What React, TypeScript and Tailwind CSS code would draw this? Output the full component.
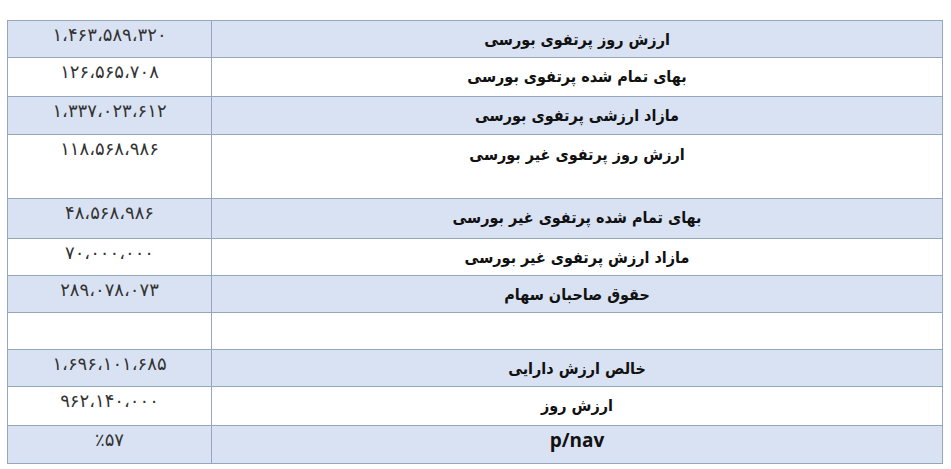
import React from 'react';

interface Row {
  value: string;
  label: string;
  height: number;
  tint: boolean;
  top?: boolean;
  latin?: boolean;
}

const rows: Row[] = [
  { value: '۱،۴۶۳،۵۸۹،۳۲۰', label: 'ارزش روز پرتفوی بورسی', height: 37, tint: true },
  { value: '۱۲۶،۵۶۵،۷۰۸', label: 'بهای تمام شده پرتفوی بورسی', height: 39, tint: false },
  { value: '۱،۳۳۷،۰۲۳،۶۱۲', label: 'مازاد ارزشی پرتفوی بورسی', height: 38, tint: true },
  { value: '۱۱۸،۵۶۸،۹۸۶', label: 'ارزش روز پرتفوی غیر بورسی', height: 64, tint: false, top: true },
  { value: '۴۸،۵۶۸،۹۸۶', label: 'بهای تمام شده پرتفوی غیر بورسی', height: 40, tint: true },
  { value: '۷۰،۰۰۰،۰۰۰', label: 'مازاد ارزش پرتفوی غیر بورسی', height: 37, tint: false },
  { value: '۲۸۹،۰۷۸،۰۷۳', label: 'حقوق صاحبان سهام', height: 37, tint: true },
  { value: '', label: '', height: 37, tint: false },
  { value: '۱،۶۹۶،۱۰۱،۶۸۵', label: 'خالص ارزش دارایی', height: 37, tint: true },
  { value: '۹۶۲،۱۴۰،۰۰۰', label: 'ارزش روز', height: 39, tint: false },
  { value: '٪۵۷', label: 'p/nav', height: 38, tint: true, latin: true },
];

export default function App() {
  return (
    <div className="w-[951px] h-[469px] bg-white pt-[20px] pl-[7px]">
      <div className="w-[936px] border-l border-t border-[#95a6bf]">
        {rows.map((r, i) => (
          <div
            key={i}
            className={`flex border-b border-[#95a6bf] ${r.tint ? 'bg-[#d9e2f2]' : 'bg-white'}`}
            style={{ height: r.height }}
          >
            <div
              dir="ltr"
              className="w-[204px] shrink-0 border-r border-[#95a6bf] flex justify-center pt-[3px] text-[18px] leading-[22px] text-[#333] font-['DejaVu_Sans',sans-serif]"
            >
              {r.value}
            </div>
            <div
              dir="rtl"
              className={`flex-1 border-r border-[#95a6bf] flex justify-center font-bold text-[#111] ${
                r.latin
                  ? "pt-[2px] text-[19px] leading-[24px] font-['Open_Sans',sans-serif]"
                  : `${r.top ? 'pt-[8px]' : 'pt-[7px]'} text-[16px] leading-[24px] font-['DejaVu_Sans_Condensed','DejaVu_Sans',sans-serif]`
              }`}
            >
              {r.label}
            </div>
          </div>
        ))}
      </div>
    </div>
  );
}
